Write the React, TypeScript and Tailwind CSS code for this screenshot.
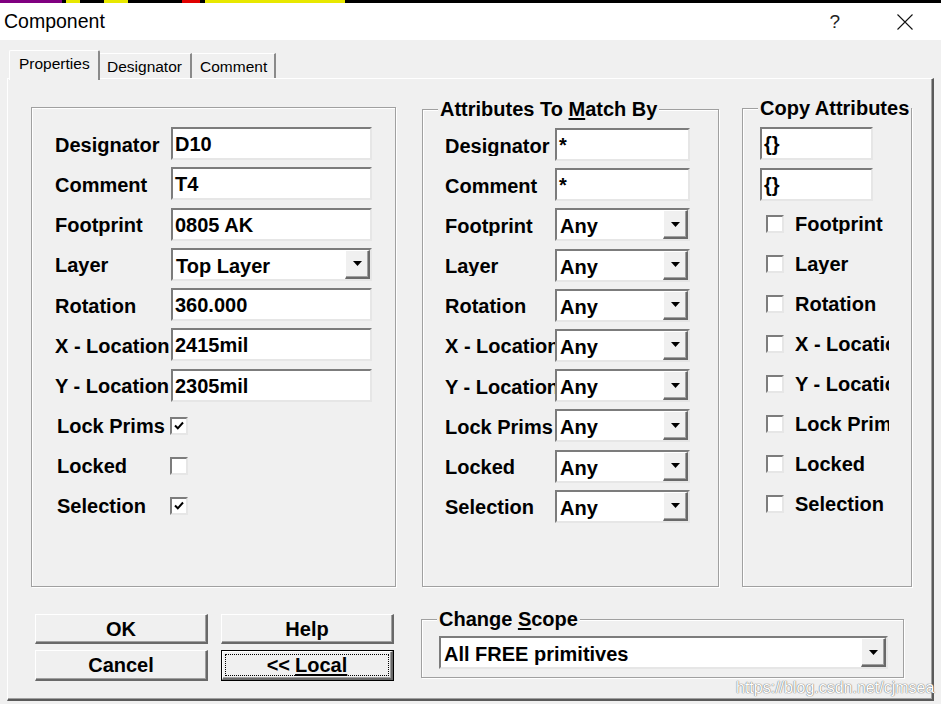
import React from "react";

const sunken =
  "border-2 border-t-[#7c7c7c] border-l-[#7c7c7c] border-b-[#e6e6e6] border-r-[#e6e6e6]";
const raised =
  "border-t border-l border-t-white border-l-white border-b-2 border-r-2 border-b-[#696969] border-r-[#696969] shadow-[inset_-1px_-1px_0_#a0a0a0]";

function Field({ value, w }: { value: string; w: string }) {
  return (
    <div className={`${w} h-[33px] shrink-0 bg-white ${sunken} flex items-center pl-[2px] pt-[1px] text-[20px] font-bold leading-none`}>
      {value}
    </div>
  );
}

function Arrow() {
  return (
    <svg width="9" height="5" viewBox="0 0 9 5">
      <path d="M0 0 H9 L4.5 5 Z" fill="#000" />
    </svg>
  );
}

function Dropdown({ value, w }: { value: string; w: string }) {
  return (
    <div className={`${w} h-[33px] shrink-0 bg-white ${sunken} flex items-center text-[20px] font-bold leading-none`}>
      <span className="pl-[3px] pt-[3px] whitespace-nowrap">{value}</span>
      <div className={`ml-auto h-full w-[25px] bg-[#f0f0f0] ${raised} flex items-center justify-center`}>
        <Arrow />
      </div>
    </div>
  );
}

function Check({ checked }: { checked?: boolean }) {
  return (
    <div className={`w-[18px] h-[18px] shrink-0 bg-white ${sunken} flex items-center justify-center`}>
      {checked && (
        <svg width="10" height="9" viewBox="0 0 10 9">
          <path d="M1 4.5 L3.8 7.3 L9 1.5" stroke="#000" strokeWidth="2" fill="none" />
        </svg>
      )}
    </div>
  );
}

function Group({
  title,
  className,
  children,
}: {
  title?: React.ReactNode;
  className: string;
  children?: React.ReactNode;
}) {
  return (
    <div className={`relative shrink-0 border border-[#a0a0a0] shadow-[1px_1px_0_#fff,inset_1px_1px_0_#fff] ${className}`}>
      {title && (
        <div className="absolute -top-[12px] left-[15px] px-[2px] bg-[#f0f0f0] text-[20px] font-bold leading-[22px] whitespace-nowrap">
          {title}
        </div>
      )}
      {children}
    </div>
  );
}

const leftFields: [string, string, boolean?][] = [
  ["Designator", "D10"],
  ["Comment", "T4"],
  ["Footprint", "0805 AK"],
  ["Layer", "Top Layer", true],
  ["Rotation", "360.000"],
  ["X - Location", "2415mil"],
  ["Y - Location", "2305mil"],
];

const leftChecks: [string, boolean][] = [
  ["Lock Prims", true],
  ["Locked", false],
  ["Selection", true],
];

const matchRows = [
  "Designator",
  "Comment",
  "Footprint",
  "Layer",
  "Rotation",
  "X - Location",
  "Y - Location",
  "Lock Prims",
  "Locked",
  "Selection",
];

const copyChecks = ["Footprint", "Layer", "Rotation", "X - Location", "Y - Location", "Lock Prims", "Locked", "Selection"];

export default function App() {
  return (
    <div className="w-[941px] h-[704px] overflow-hidden relative bg-[#f0f0f0] text-black [font-family:'Liberation_Sans',Arial,sans-serif] flex flex-col">
      {/* strip of the app behind */}
      <div className="h-[3px] flex bg-black shrink-0">
        <div className="w-[62px] bg-[#800080]" />
        <div className="w-[4px]" />
        <div className="w-[14px] bg-[#e8e800]" />
        <div className="w-[24px]" />
        <div className="w-[24px] bg-[#e8e800]" />
        <div className="w-[54px]" />
        <div className="w-[18px] bg-[#e00000]" />
        <div className="w-[5px]" />
        <div className="w-[140px] bg-[#e8e800]" />
      </div>

      {/* title bar */}
      <div className="h-[37px] bg-white flex items-center shrink-0">
        <span className="pl-[4px] text-[19.5px] leading-none">Component</span>
        <span className="ml-auto text-[19px] leading-none text-[#222]">?</span>
        <svg className="ml-[57px] mr-[28px]" width="16" height="16" viewBox="0 0 16 16">
          <path d="M0.5 0.5 L15.5 15.5 M15.5 0.5 L0.5 15.5" stroke="#111" strokeWidth="1.1" />
        </svg>
      </div>

      {/* body */}
      <div className="pt-[10px] flex flex-col">
        {/* tabs */}
        <div className="h-[28px] flex items-end pl-[9px] text-[15.5px] leading-none">
          <div className="relative z-10 h-[30px] -mb-[2px] w-[91px] bg-[#f0f0f0] border-t border-l border-white border-r-2 border-r-[#8a8a8a] rounded-t-[2px] pl-[9px] pt-[5px]">
            Properties
          </div>
          <div className="h-[25px] w-[92px] border-t border-white border-r-2 border-r-[#8a8a8a] pl-[7px] pt-[5px]">
            Designator
          </div>
          <div className="h-[25px] w-[84px] border-t border-white border-r-2 border-r-[#8a8a8a] pl-[8px] pt-[5px]">
            Comment
          </div>
        </div>

        {/* tab panel */}
        <div className="ml-[7px] w-[927px] h-[623px] border-t border-l border-white border-r-2 border-b-2 border-r-[#5a5a5a] border-b-[#5a5a5a] shadow-[inset_-1px_-1px_0_#a0a0a0] pl-[23px] pt-[28px] flex flex-col">
          <div className="flex items-start">
            {/* left group */}
            <Group className="w-[365px] h-[480px] pl-[23px] pt-[19px]">
              <div className="flex flex-col gap-[7.3px]">
                {leftFields.map(([label, value, dd]) => (
                  <div key={label} className="h-[33px] flex items-center">
                    <div className="w-[116px] shrink-0 text-[20px] font-bold leading-none whitespace-nowrap pt-[2px]">{label}</div>
                    {dd ? <Dropdown value={value} w="w-[201px]" /> : <Field value={value} w="w-[201px]" />}
                  </div>
                ))}
              </div>
              <div className="mt-[4px] flex flex-col">
                {leftChecks.map(([label, c]) => (
                  <div key={label} className="h-[40px] flex items-center">
                    <div className="w-[115px] pl-[2px] shrink-0 text-[20px] font-bold leading-none whitespace-nowrap">{label}</div>
                    <Check checked={c} />
                  </div>
                ))}
              </div>
            </Group>

            {/* middle group */}
            <Group
              className="ml-[26px] mt-[2px] w-[297px] h-[478px] pl-[22px] pt-[18px]"
              title={
                <>
                  Attributes To <span className="underline underline-offset-2">M</span>atch By
                </>
              }
            >
              <div className="flex flex-col gap-[7.2px]">
                {matchRows.map((label, i) => (
                  <div key={label} className="h-[33px] flex items-center">
                    <div className="w-[110px] shrink-0 overflow-hidden text-[20px] font-bold leading-none whitespace-nowrap pt-[2px]">{label}</div>
                    {i < 2 ? <Field value="*" w="w-[135px]" /> : <Dropdown value="Any" w="w-[135px]" />}
                  </div>
                ))}
              </div>
            </Group>

            {/* right group */}
            <Group className="ml-[23px] mt-[1px] w-[170px] h-[479px] pl-[17px] pt-[18px]" title="Copy Attributes">
              <div className="flex flex-col gap-[8px]">
                <Field value="{}" w="w-[113px]" />
                <Field value="{}" w="w-[113px]" />
              </div>
              <div className="mt-[3px] flex flex-col">
                {copyChecks.map((label) => (
                  <div key={label} className="h-[40px] flex items-center pl-[6px]">
                    <Check />
                    <div className="ml-[11px] w-[94px] overflow-hidden text-[20px] font-bold leading-none whitespace-nowrap">{label}</div>
                  </div>
                ))}
              </div>
            </Group>
          </div>

          {/* bottom row */}
          <div className="mt-[27px] flex items-start">
            <div className="ml-[4px] grid grid-cols-[173px_173px] grid-rows-[30px_31px] gap-x-[13px] gap-y-[6px] text-[20px] font-bold leading-none">
              <div className={`bg-[#f0f0f0] ${raised} flex items-center justify-center`}>OK</div>
              <div className={`bg-[#f0f0f0] ${raised} flex items-center justify-center`}>Help</div>
              <div className={`bg-[#f0f0f0] ${raised} flex items-center justify-center`}>Cancel</div>
              <div className="border border-black flex">
                <div className={`flex-1 bg-[#f0f0f0] ${raised} p-[2px] flex`}>
                  <div className="flex-1 border border-dotted border-black flex items-center justify-center">
                    &lt;&lt; <span className="ml-[5px] underline underline-offset-2">Local</span>
                  </div>
                </div>
              </div>
            </div>

            <Group
              className="ml-[27px] mt-[5px] w-[483px] h-[59px] pl-[17px] pt-[16px]"
              title={
                <>
                  Change <span className="underline underline-offset-2">S</span>cope
                </>
              }
            >
              <Dropdown value="All FREE primitives" w="w-[449px]" />
            </Group>
          </div>
        </div>
      </div>

      {/* watermark */}
      <div className="absolute left-[736px] top-[676px] text-[16px] text-white [text-shadow:0_0_1px_#6a6a6a,0_0_1px_#6a6a6a] whitespace-nowrap">
        https://blog.csdn.net/cjmsea
      </div>
    </div>
  );
}
